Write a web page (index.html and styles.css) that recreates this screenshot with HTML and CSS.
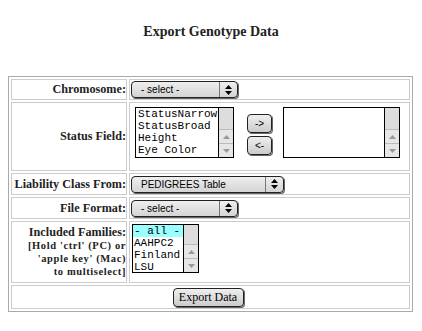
FILE: index.html
```html
<!DOCTYPE html>
<html lang="en">
<head>
    <meta charset="utf-8">
    <title>Export Genotype Data</title>
    <link rel="stylesheet" href="styles.css">
</head>
<body>

    <h1 class="title">Export Genotype Data</h1>

    <table class="export-table">
        <tr class="row-chrom">
            <td class="label">Chromosome:</td>
            <td class="field">
                <span class="popup popup-short">
                    <span class="popup-text">- select -</span>
                    <span class="popup-arrow"><svg width="7" height="10" viewBox="0 0 7 10"><path d="M3.5 0L7 4H0Z M0 6H7L3.5 10Z"/></svg></span>
                </span>
            </td>
        </tr>
        <tr class="row-status">
            <td class="label">Status Field:</td>
            <td class="field field-status">
                <div class="picker">
                    <div class="listbox listbox-left">
                        <div class="options">
                            <div>StatusNarrow</div>
                            <div>StatusBroad</div>
                            <div>Height</div>
                            <div>Eye Color</div>
                        </div>
                        <div class="scrollbar">
                            <span class="track"></span>
                            <span class="arrow"><svg width="7" height="4" viewBox="0 0 7 4"><path d="M3.5 0L7 4H0Z"/></svg></span>
                            <span class="arrow"><svg width="7" height="4" viewBox="0 0 7 4"><path d="M0 0H7L3.5 4Z"/></svg></span>
                        </div>
                    </div>
                    <div class="move-btns">
                        <span class="btn btn-small">-&gt;</span>
                        <span class="btn btn-small">&lt;-</span>
                    </div>
                    <div class="listbox listbox-right">
                        <div class="options"></div>
                        <div class="scrollbar">
                            <span class="track"></span>
                            <span class="arrow"><svg width="7" height="4" viewBox="0 0 7 4"><path d="M3.5 0L7 4H0Z"/></svg></span>
                            <span class="arrow"><svg width="7" height="4" viewBox="0 0 7 4"><path d="M0 0H7L3.5 4Z"/></svg></span>
                        </div>
                    </div>
                </div>
            </td>
        </tr>
        <tr class="row-liability">
            <td class="label">Liability Class From:</td>
            <td class="field">
                <span class="popup popup-long">
                    <span class="popup-text">PEDIGREES Table</span>
                    <span class="popup-arrow"><svg width="7" height="10" viewBox="0 0 7 10"><path d="M3.5 0L7 4H0Z M0 6H7L3.5 10Z"/></svg></span>
                </span>
            </td>
        </tr>
        <tr class="row-format">
            <td class="label">File Format:</td>
            <td class="field">
                <span class="popup popup-short">
                    <span class="popup-text">- select -</span>
                    <span class="popup-arrow"><svg width="7" height="10" viewBox="0 0 7 10"><path d="M3.5 0L7 4H0Z M0 6H7L3.5 10Z"/></svg></span>
                </span>
            </td>
        </tr>
        <tr class="row-families">
            <td class="label">
                Included Families:<br>
                <span class="hint">[Hold 'ctrl' (PC) or<br>'apple key' (Mac)<br>to multiselect]</span>
            </td>
            <td class="field field-families">
                <div class="listbox listbox-families">
                    <div class="options">
                        <div class="selected">- all -</div>
                        <div>AAHPC2</div>
                        <div>Finland</div>
                        <div>LSU</div>
                    </div>
                    <div class="scrollbar">
                        <span class="track"></span>
                        <span class="arrow"><svg width="7" height="4" viewBox="0 0 7 4"><path d="M3.5 0L7 4H0Z"/></svg></span>
                        <span class="arrow"><svg width="7" height="4" viewBox="0 0 7 4"><path d="M0 0H7L3.5 4Z"/></svg></span>
                    </div>
                </div>
            </td>
        </tr>
        <tr class="row-submit">
            <td class="submit" colspan="2">
                <span class="btn btn-export">Export Data</span>
            </td>
        </tr>
    </table>

</body>
</html>
```

FILE: styles.css
```css
body {
    margin: 8px;
    background: #fff;
    color: #000;
    font-family: "Liberation Serif", "Times New Roman", serif;
}
.title {
    margin: 15px 0 35px;
    font-size: 14px;
    line-height: 18px;
    font-weight: bold;
    text-align: center;
    color: #222;
}
.export-table {
    width: 405px;
    table-layout: fixed;
    border: 1px solid #aaa;
    border-spacing: 2px;
}
.export-table td {
    box-sizing: border-box;
    border: 1px solid #ccc;
    padding: 1px;
}
.row-chrom { height: 21px; }
.row-status { height: 69px; }
.row-liability { height: 22px; }
.row-format { height: 22px; }
.row-families { height: 62px; }
.row-submit { height: 24px; }
.export-table .label {
    width: 116px;
    padding: 1px 0 1px 1px;
    text-align: right;
    font-size: 12.2px;
    line-height: 13px;
    font-weight: bold;
    color: #222;
    white-space: nowrap;
}
.hint {
    font-size: 10.5px;
    line-height: 10.5px;
    letter-spacing: 0.6px;
}
.field {
    font-size: 0;
    line-height: 0;
}
.export-table .field-status {
    vertical-align: top;
    padding: 4px 1px 1px 5px;
}
.export-table .field-families {
    vertical-align: top;
    padding: 2px 1px 1px 2px;
}

/* popup menus */
.popup {
    display: inline-flex;
    box-sizing: border-box;
    height: 17px;
    border: 1px solid #222;
    border-radius: 4px;
    background: linear-gradient(#eee, #d4d4d4);
    box-shadow: 1px 1px 0 #666;
    font-family: "Liberation Sans", Arial, sans-serif;
    font-size: 10px;
    line-height: 15px;
}
.popup-short { width: 107px; }
.popup-long { width: 153px; }
.popup-text {
    flex: 1;
    padding-left: 9px;
    white-space: nowrap;
}
.popup-arrow {
    display: flex;
    align-items: center;
    justify-content: center;
    width: 17px;
    border-left: 1px solid #777;
}

/* list boxes */
.picker {
    display: flex;
    align-items: center;
}
.listbox {
    display: flex;
    flex-shrink: 0;
    box-sizing: border-box;
    height: 51px;
    border: 1px solid #000;
    background: #fff;
}
.listbox-left { width: 99px; }
.listbox-right { width: 117px; }
.listbox-families { width: 67px; height: 49px; }
.options {
    flex: 1;
    padding-left: 2px;
    font-family: "Liberation Mono", "Courier New", monospace;
    font-size: 11px;
    line-height: 12px;
    white-space: nowrap;
    overflow: hidden;
}
.listbox-families .options {
    padding-left: 0;
}
.listbox-families .options div {
    padding-left: 1px;
}
.selected {
    background: #9ff;
}
.scrollbar {
    display: flex;
    flex-direction: column;
    width: 14px;
    border-left: 1px solid #000;
    background: #ddd;
}
.track {
    flex: 1;
}
.arrow {
    display: flex;
    align-items: center;
    justify-content: center;
    height: 13px;
    border-top: 1px solid #bbb;
    background: #e6e6e6;
    fill: #999;
}

/* buttons */
.move-btns {
    display: flex;
    flex-shrink: 0;
    flex-direction: column;
    gap: 3px;
    margin: 4px 11px 0 13px;
}
.btn {
    display: inline-flex;
    align-items: center;
    justify-content: center;
    box-sizing: border-box;
    border: 1px solid #222;
    border-radius: 4px;
    background: linear-gradient(#eee, #ccc);
    box-shadow: 1px 1px 0 #666;
    color: #000;
}
.btn-small {
    width: 25px;
    height: 19px;
    font-family: "Liberation Sans", Arial, sans-serif;
    font-size: 10px;
}
.export-table .submit {
    text-align: center;
    padding: 1px 6px 1px 1px;
}
.btn-export {
    width: 71px;
    height: 19px;
    font-size: 12px;
}
```
